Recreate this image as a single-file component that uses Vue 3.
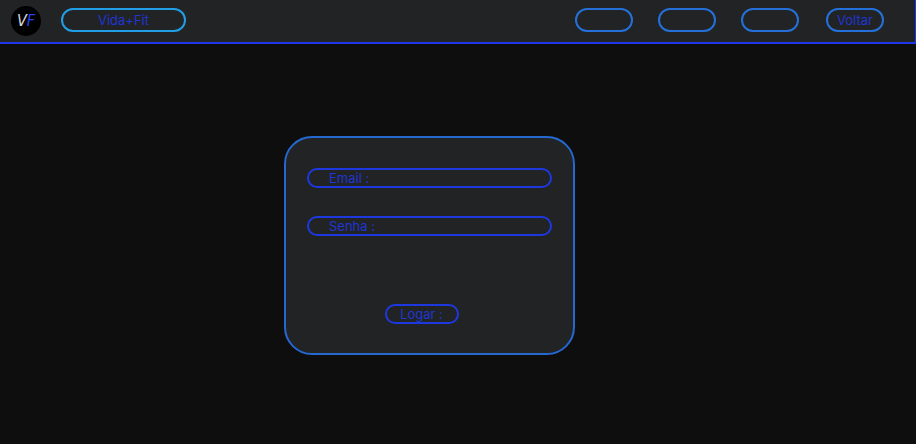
<script setup>
import { ref } from 'vue'

const email = ref('')
const senha = ref('')
const atalhos = ['Atalho 1', 'Atalho 2', 'Atalho 3']
</script>

<template>
  <div class="page">
    <header class="topbar">
      <span class="logo"><span class="logo-v">V</span><span class="logo-f">F</span></span>
      <a class="pill brand" href="#">Vida+Fit</a>
      <nav class="nav">
        <button v-for="a in atalhos" :key="a" class="pill" type="button" :aria-label="a"></button>
        <a class="pill back" href="#">Voltar</a>
      </nav>
    </header>
    <main class="main">
      <form class="card" @submit.prevent>
        <div class="field">
          <label for="email">Email :</label>
          <input id="email" v-model="email" type="email" />
        </div>
        <div class="field">
          <label for="senha">Senha :</label>
          <input id="senha" v-model="senha" type="password" />
        </div>
        <button class="submit" type="submit">Logar :</button>
      </form>
    </main>
  </div>
</template>

<style>
body {
  background: #0e0e0e;
}
</style>

<style scoped>
.page {
  min-height: 100vh;
  display: flex;
  flex-direction: column;
  font-family: Inter, "Liberation Sans", sans-serif;
  font-size: 13px;
  font-weight: 400;
  color: #1e36d2;
}
.page * {
  box-sizing: border-box;
}
.topbar {
  display: flex;
  align-items: flex-start;
  height: 44px;
  padding: 6px 31px 0 11px;
  background: #222325;
  border-bottom: 2px solid #1e38e8;
  border-right: 1px solid #1e38e8;
}
.logo {
  width: 30px;
  height: 30px;
  border-radius: 50%;
  background: #000;
  display: flex;
  align-items: center;
  justify-content: center;
  font-family: "Liberation Sans Narrow", "DejaVu Sans Condensed", sans-serif;
  font-size: 16px;
  font-style: italic;
  font-weight: 400;
  line-height: 30px;
}
.logo-v {
  color: #d8d8d8;
}
.logo-f {
  color: #2440f0;
}
.pill {
  display: flex;
  align-items: center;
  justify-content: center;
  width: 58px;
  height: 24px;
  margin-top: 2px;
  padding: 0;
  border: 2px solid #2470d8;
  border-radius: 12px;
  background: transparent;
  color: inherit;
  font: inherit;
  text-decoration: none;
}
.brand {
  width: 125px;
  margin-left: 20px;
  border-color: #219ee6;
}
.nav {
  display: flex;
  gap: 25px;
  margin-left: auto;
}
.back {
  margin-left: 2px;
}
.main {
  flex: 1;
  display: flex;
  align-items: center;
  justify-content: center;
  padding: 2px 57px 0 0;
}
.card {
  display: flex;
  flex-direction: column;
  width: 291px;
  padding: 30px 21px 29px;
  gap: 28px;
  border: 2px solid #2468d0;
  border-radius: 28px;
  background: #222325;
}
.field {
  display: flex;
  align-items: center;
  height: 20px;
  padding-left: 20px;
  border: 2px solid #1e38e0;
  border-radius: 10px;
}
.field input {
  flex: 1;
  min-width: 0;
  height: 16px;
  margin: 0;
  padding: 0 12px 0 6px;
  border: 0;
  outline: 0;
  background: transparent;
  color: inherit;
  font: inherit;
}
.submit {
  align-self: center;
  width: 74px;
  height: 20px;
  margin: 40px 16px 0 0;
  padding: 0;
  border: 2px solid #1e38e0;
  border-radius: 10px;
  background: transparent;
  color: inherit;
  font: inherit;
  line-height: 16px;
}
</style>
